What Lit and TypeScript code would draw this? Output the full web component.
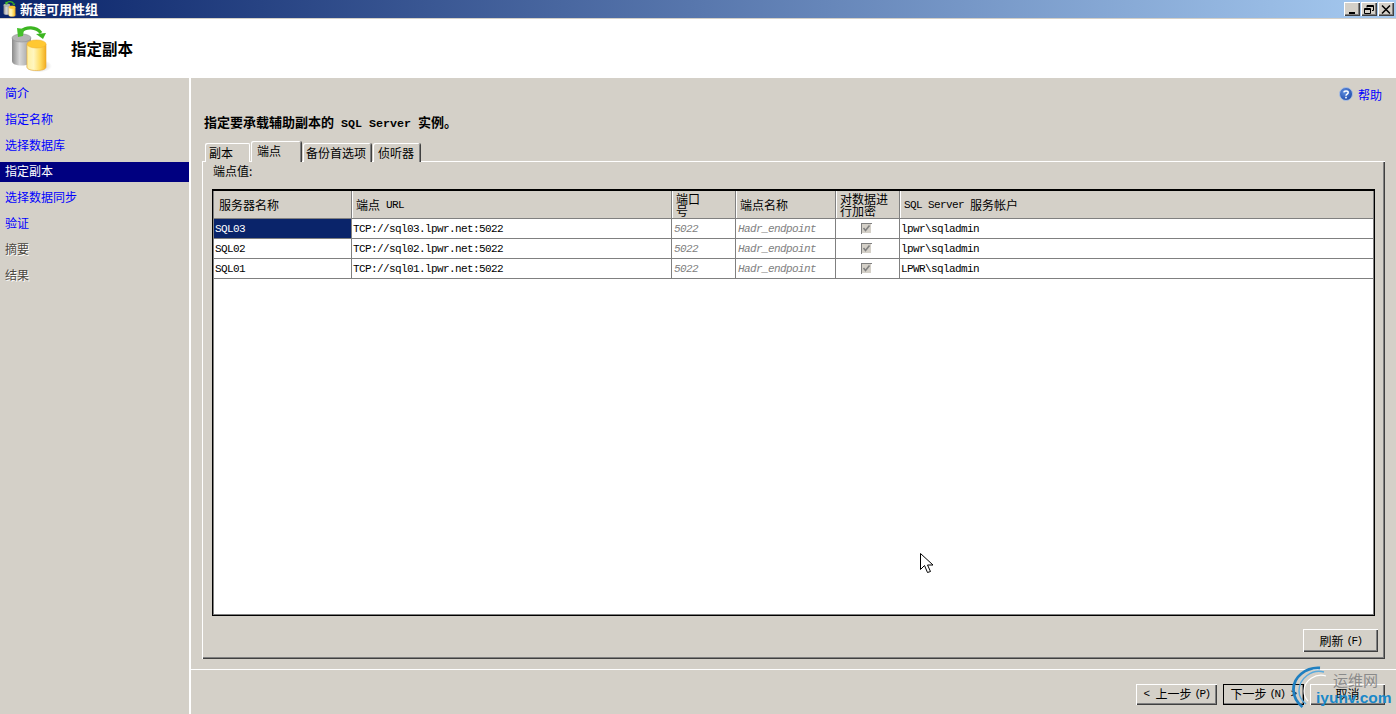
import { LitElement, html, css, svg } from "lit";
import { customElement } from "lit/decorators.js";

const dbIcon = svg`
  <defs>
    <linearGradient id="gr" x1="0" x2="1" y1="0" y2="0"><stop offset="0" stop-color="#8a8a8a"/><stop offset=".4" stop-color="#d8d8d8"/><stop offset="1" stop-color="#9a9a9a"/></linearGradient>
    <linearGradient id="ye" x1="0" x2="1" y1="0" y2="0"><stop offset="0" stop-color="#fff0a0"/><stop offset=".35" stop-color="#fff6c0"/><stop offset=".7" stop-color="#ffdc60"/><stop offset="1" stop-color="#f2ac20"/></linearGradient>
    <radialGradient id="sh" cx=".4" cy=".5" r=".6"><stop offset="0" stop-color="#888" stop-opacity=".6"/><stop offset="1" stop-color="#888" stop-opacity="0"/></radialGradient>
  </defs>
  <ellipse cx="28" cy="40" rx="13" ry="6" fill="url(#sh)"/>
  <path d="M1 12v23c0 3 4 4.500 9.500 4.500S20 38 20 35V12z" fill="url(#gr)"/>
  <ellipse cx="10.500" cy="12" rx="9.500" ry="4" fill="#b4b4b4" stroke="#8e8e8e" stroke-width=".6"/>
  <path d="M16 18v23c0 2.500 4.500 3.500 9.500 3.500S35 43.500 35 41V18z" fill="url(#ye)" stroke="#eaa92a" stroke-width=".6"/>
  <ellipse cx="25.500" cy="18" rx="9.500" ry="4" fill="#ffc832" stroke="#f0b330" stroke-width=".6"/>
  <path d="M10 5.500C15 .500 25 .500 30 7" fill="none" stroke="#3cb521" stroke-width="3.200"/>
  <path d="M6 2l7 1-1 7-5 1z" fill="#45c02a"/>
  <path d="M25 8l10-1-3 6z" fill="#3cb521"/>
`;

const NAV: [string, string][] = [
  ["简介", "link"], ["指定名称", "link"], ["选择数据库", "link"], ["指定副本", "sel"],
  ["选择数据同步", "link"], ["验证", "link"], ["摘要", "off"], ["结果", "off"],
];
const ROWS = [
  ["SQL03", "TCP://sql03.lpwr.net:5022", "lpwr\\sqladmin"],
  ["SQL02", "TCP://sql02.lpwr.net:5022", "lpwr\\sqladmin"],
  ["SQL01", "TCP://sql01.lpwr.net:5022", "LPWR\\sqladmin"],
];

@customElement("app-root")
export class AppRoot extends LitElement {
  static styles = css`
    :host { display: block; width: 1396px; height: 714px; overflow: hidden; position: relative;
      font-family: "Noto Sans CJK SC", "Liberation Sans", sans-serif; font-size: 12px; color: #000; background: #d4d0c8; }
    .m { font-family: "Liberation Mono", monospace; font-size: 11px; letter-spacing: -0.6px; white-space: pre; }
    .k { font-family: "Liberation Mono", monospace; font-size: 11px; letter-spacing: -1.600px; white-space: pre; margin-left: 3px; }
    .win { display: flex; flex-direction: column; height: 714px; }
    .titlebar { height: 18px; flex: none; display: flex; align-items: center; padding: 0 2px 0 3px; box-sizing: border-box;
      background: linear-gradient(90deg, #0a246a, #a6caf0); color: #fff; font-weight: 700; font-size: 13px; }
    .titlebar > svg { width: 15px; height: 16px; margin-right: 2px; }
    .ttl { line-height: 16px; margin-top: -1px; }
    .caps { margin-left: auto; display: flex; gap: 1px; }
    .cap { width: 16px; height: 14px; box-sizing: border-box; background: #d4d0c8; display: flex; align-items: center; justify-content: center;
      box-shadow: inset 1px 1px 0 #fff, inset -1px -1px 0 #404040, inset -2px -2px 0 #808080; }
    .cap svg { width: 10px; height: 9px; }
    .tline { height: 1px; flex: none; background: #d4d0c8; }
    .header { height: 59px; flex: none; background: #fff; display: flex; align-items: center; }
    .header svg { width: 42px; height: 46px; margin-left: 11px; margin-top: 1px; }
    .header h1 { margin: -1px 0 0 18px; font-size: 15.500px; font-weight: 700; line-height: 20px; }
    .body { flex: 1; display: flex; min-height: 0; }
    .side { width: 189px; flex: none; border-right: 2px solid #fff; padding-top: 6px; display: flex; flex-direction: column; gap: 6px; }
    .nav { height: 20px; line-height: 18px; padding-left: 5px; }
    .nav.link { color: #0000ff; }
    .nav.sel { background: #000080; color: #fff; }
    .nav.off { color: #4c4840; text-shadow: 1px 1px 0 #fff; }
    .main { flex: 1; display: flex; flex-direction: column; min-width: 0; }
    .help { display: flex; justify-content: flex-end; align-items: center; gap: 5px; height: 16px; margin-top: 8px; padding-right: 14px; color: #0000ff; }
    .help svg { width: 14px; height: 14px; }
    .lead { margin: 12px 0 0 13px; height: 16px; line-height: 16px; font-weight: 700; font-size: 13px; }
    .lead .m { font-weight: 700; font-size: 11.670px; letter-spacing: 0; }
    .tabs { display: flex; align-items: flex-end; height: 20px; margin: 12px 0 -1px 14px; position: relative; z-index: 1; }
    .tab { height: 19px; line-height: 20px; box-sizing: border-box; padding: 0 0 0 4px; background: #d4d0c8; border-radius: 2px 2px 0 0;
      box-shadow: inset 1px 1px 0 #fff, inset -1px 0 0 #808080, 1px 0 0 #404040; margin-right: 2px; }
    .tab.t1 { width: 45px; margin-right: 1px; box-shadow: inset 1px 1px 0 #fff, inset -1px 0 0 #fff; }
    .tab.t2 { width: 50px; height: 21px; line-height: 20px; padding-left: 6px; }
    .tab.t3 { width: 68px; padding-left: 3px; }
    .tab.t4 { width: 47px; padding-left: 5px; }
    .panel { margin-left: 11px; width: 1183px; height: 498px; box-sizing: border-box; display: flex; flex-direction: column; padding: 1px 8px 0 10px;
      box-shadow: inset 1px 1px 0 #fff, inset -1px -1px 0 #404040, inset -2px -2px 0 #808080; flex: none; }
    .plabel { height: 18px; line-height: 18px; padding-left: 1px; }
    .grid { height: 427px; margin-top: 9px; width: 1163px; box-sizing: border-box; background: #fff; border: 1px solid #000; border-top-width: 2px; box-shadow: 0 0 0 1px #808080 inset; }
    .row { display: grid; grid-template-columns: 138px 320px 64px 100px 64px 1fr; margin: 0 1px; }
    .hd { height: 27px; background: #d4d0c8; border-bottom: 1px solid #808080; }
    .hd > div { padding-left: 4px; box-sizing: border-box; display: flex; align-items: center; border-right: 1px solid #808080; box-shadow: 1px 0 0 #fff; }
    .hd > div:first-child { padding-left: 5px; }
    .hd > div:last-child { border-right: 0; box-shadow: none; }
    .hd .two { line-height: 12px; }
    .dr { height: 20px; box-sizing: border-box; border-bottom: 1px solid #808080; line-height: 20px; }
    .dr > div { padding-left: 1px; box-sizing: border-box; border-right: 1px solid #808080; overflow: hidden; white-space: nowrap; }
    .dr > div:last-child { border-right: 0; }
    .dr .sel { background: #0a246a; color: #fff; }
    .dr .it { font-style: italic; color: #808080; padding-left: 2px; }
    .dr .chk { display: flex; align-items: center; justify-content: center; padding-left: 0; }
    .box { width: 11px; height: 11px; background: #d4d0c8; box-shadow: inset 1px 1px 0 #808080, inset -1px -1px 0 #fff; display: flex; margin-right: 2px; }
    .box svg { width: 11px; height: 11px; }
    .prow { display: flex; justify-content: flex-end; margin-top: 13px; }
    .btn { height: 23px; box-sizing: border-box; background: #d4d0c8; display: flex; align-items: center; justify-content: center;
      box-shadow: inset 1px 1px 0 #fff, inset -1px -1px 0 #404040, inset -2px -2px 0 #808080; }
    .btn.ref { width: 75px; margin-right: -1px; }
    .foot { margin-top: 10px; border-top: 1px solid #fff; display: flex; justify-content: flex-end; gap: 6px; padding: 14px 11px 0 0; }
    .foot .btn { height: 21px; padding-bottom: 2px; }
    .foot .w81 { width: 81px; }
    .foot .w75 { width: 75px; }
    .foot .def { outline: 1px solid #000; outline-offset: -1px; }
    .cursor { position: absolute; left: 920px; top: 553px; width: 13px; height: 21px; }
    .mark { position: absolute; left: 1292px; top: 666px; width: 104px; height: 44px; pointer-events: none; }
    .mark svg { position: absolute; left: 0; top: 0; width: 44px; height: 44px; }
    .mark .cn { position: absolute; left: 41px; top: 5px; font-size: 15px; line-height: 18px; color: #8a8a8a; }
    .mark .en { position: absolute; left: 24px; top: 23px; font-family: "Liberation Sans", sans-serif; font-weight: 700; font-size: 15.500px; line-height: 18px; color: #1a88c9; }
  `;

  render() {
    return html`
      <div class="win">
        <div class="titlebar">
          <svg viewBox="0 0 42 46">${dbIcon}</svg><span class="ttl">新建可用性组</span>
          <div class="caps">
            <div class="cap"><svg viewBox="0 0 10 9"><rect x="2" y="7" width="6" height="2" fill="#000"/></svg></div>
            <div class="cap"><svg viewBox="0 0 10 9"><path d="M3 .5h6.500v5H8M3 .5v2M3 1.500h6.500M.5 3.500h6v5h-6zM.5 4.500h6" fill="none" stroke="#000"/></svg></div>
            <div class="cap"><svg viewBox="0 0 10 9"><path d="M1 .5l8 8M9 .5l-8 8" stroke="#000" stroke-width="1.500"/></svg></div>
          </div>
        </div>
        <div class="tline"></div>
        <div class="header">
          <svg viewBox="0 0 42 46">${dbIcon}</svg>
          <h1>指定副本</h1>
        </div>
        <div class="body">
          <div class="side">${NAV.map(([t, c]) => html`<div class="nav ${c}">${t}</div>`)}</div>
          <div class="main">
            <div class="help">
              <svg viewBox="0 0 14 14">
                <defs><radialGradient id="hb" cx=".4" cy=".35" r=".7"><stop offset="0" stop-color="#5f8fe0"/><stop offset="1" stop-color="#1c47a8"/></radialGradient></defs>
                <circle cx="7" cy="7" r="6.500" fill="url(#hb)" stroke="#a9bfe4"/>
                <path d="M4.800 5.400C5 3.400 9.200 3.400 9.200 5.500c0 1.600-2.200 1.500-2.200 3.200" fill="none" stroke="#fff" stroke-width="1.500"/>
                <rect x="6.200" y="9.800" width="1.600" height="1.600" fill="#fff"/>
              </svg>
              <span>帮助</span>
            </div>
            <div class="lead">指定要承载辅助副本的<span class="m"> SQL Server </span>实例。</div>
            <div class="tabs">
              <div class="tab t1">副本</div>
              <div class="tab t2">端点</div>
              <div class="tab t3">备份首选项</div>
              <div class="tab t4">侦听器</div>
            </div>
            <div class="panel">
              <div class="plabel">端点值:</div>
              <div class="grid">
                <div class="row hd">
                  <div>服务器名称</div>
                  <div>端点<span class="m"> URL</span></div>
                  <div class="two">端口<br />号</div>
                  <div>端点名称</div>
                  <div class="two">对数据进<br />行加密</div>
                  <div><span class="m">SQL Server </span>服务帐户</div>
                </div>
                ${ROWS.map((r, i) => html`
                  <div class="row dr">
                    <div class="m ${i === 0 ? "sel" : ""}">${r[0]}</div>
                    <div class="m">${r[1]}</div>
                    <div class="m it">5022</div>
                    <div class="m it">Hadr_endpoint</div>
                    <div class="chk"><span class="box"><svg viewBox="0 0 11 11"><path d="M2.500 5l2 2.500 4-5" fill="none" stroke="#808080" stroke-width="1.600"/></svg></span></div>
                    <div class="m">${r[2]}</div>
                  </div>`)}
              </div>
              <div class="prow"><div class="btn ref">刷新<span class="k">(F)</span></div></div>
            </div>
            <div class="foot">
              <div class="btn w81"><span class="m">&lt; </span>上一步<span class="k">(P)</span></div>
              <div class="btn w81 def">下一步<span class="k">(N)</span><span class="m"> &gt;</span></div>
              <div class="btn w75">取消</div>
            </div>
          </div>
        </div>
      </div>
      <svg class="cursor" viewBox="0 0 13 21"><path d="M.5.500v16l4-4 3 7 3-1-3-6.500h5.500z" fill="#fff" stroke="#000"/></svg>
      <div class="mark">
        <svg viewBox="0 0 44 44" fill="none" stroke="#1f7fc0">
          <path d="M28 2C14 1 1 11 1.500 24c.3 8 4 13 9 17" stroke-width="2.800"/>
          <path d="M32 6C20 3 7 12 7 25c0 6 3 10 7 13" stroke-width="1.500" stroke="#5aaade"/>
          <path d="M34 10C24 7 12 14 12 25c0 4 1 7 4 10" stroke-width="1.200" stroke="#fff"/>
        </svg>
        <span class="cn">运维网</span>
        <span class="en">iyunv.com</span>
      </div>
    `;
  }
}
